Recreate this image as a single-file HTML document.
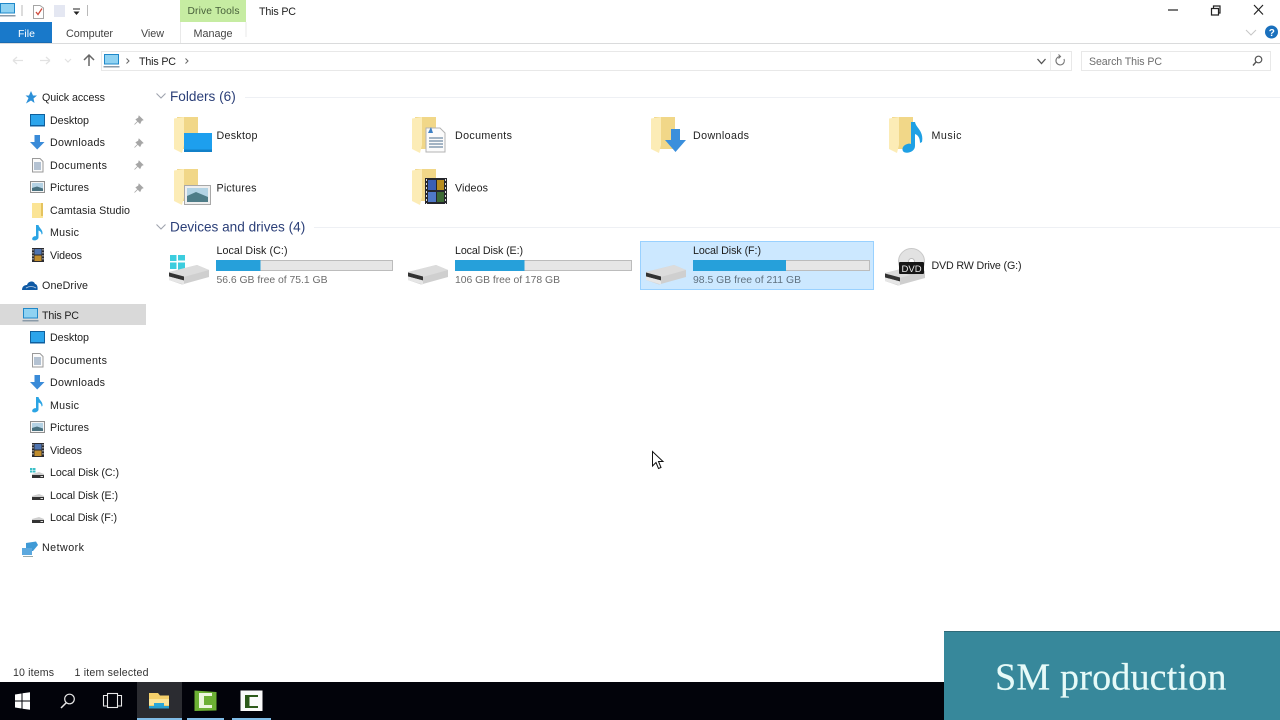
<!DOCTYPE html>
<html><head><meta charset="utf-8"><title>This PC</title>
<style>
html,body{margin:0;padding:0;background:#fff;width:1280px;height:720px;overflow:hidden}
svg{display:block;position:absolute;left:0;top:0;filter:blur(.3px)}
text{font-family:"Liberation Sans",sans-serif;font-size:10.7px;fill:#1e1e1e}
.g{fill:#6d6d6d}
.h{font-size:13.6px;fill:#2b3f78}
.r{font-size:10.8px;fill:#444}
.wm{font-family:"Liberation Serif",serif;font-size:38px;letter-spacing:.2px;fill:#e6faf8;stroke:#e6faf8;stroke-width:.2px}
</style></head><body>
<svg width="1280" height="720" viewBox="0 0 1280 720" xmlns="http://www.w3.org/2000/svg">
<defs>
<symbol id="folder" overflow="visible">
 <path d="M3 2H24V34H9Z" fill="#f1d788"/>
 <path d="M0 3.500L10 2V30L8 38L0 34Z" fill="#fcecb6"/>
</symbol>
<symbol id="drive" overflow="visible">
 <path d="M0 7L28 0L40 5V12L13 19.500L0 15Z" fill="#cfcfcf"/>
 <path d="M0 7L28 0L40 5L13 12.500Z" fill="#dcdcdc"/>
 <path d="M0 7.500L15 11.500V15.500L0 11.500Z" fill="#333"/>
 <path d="M0 11.500L15 15.500V19.500L0 15Z" fill="#e6e6e6"/>
</symbol>
<symbol id="sdrive" overflow="visible">
 <path d="M0 2L7 0L12 2V3H0Z" fill="#cfcfcf"/>
 <path d="M0 3H12V6H0Z" fill="#333"/>
 <path d="M8.500 4H11V5H8.500Z" fill="#ddd"/>
</symbol>
<symbol id="sdesk" overflow="visible">
 <rect x="0.500" y="0.500" width="14" height="11" fill="#2ca5ec" stroke="#10609c"/>
 <path d="M0 11H15V12.500H0Z" fill="#0f5f9f"/>
</symbol>
<symbol id="sdown" overflow="visible">
 <path d="M4.500 0H10V7H14.500L7.200 14.500L0 7H4.500Z" fill="#3a8bd8"/>
</symbol>
<symbol id="sdoc" overflow="visible">
 <path d="M1.500 .5H9L12 3.500V14H1.500Z" fill="#fbfbfb" stroke="#9a9a9a"/>
 <path d="M3 5H10M3 7H10M3 9H10M3 11H10" stroke="#6c8aa8"/>
</symbol>
<symbol id="spic" overflow="visible">
 <rect x=".5" y=".5" width="14" height="11" fill="#f4f4f4" stroke="#8e8e8e"/>
 <rect x="2" y="2" width="11" height="8" fill="#b4d2e4"/>
 <path d="M2 7L7 5.500L13 7.500V10H2Z" fill="#4a7280"/>
</symbol>
<symbol id="smusic" overflow="visible">
 <path d="M4 0H6.500C7 3 11 4.500 10.500 9L9.500 9.500C9.500 7 8 6 6.500 5.500V12.500C6.500 14.500 3.500 15.800 1.500 15.300C-.5 14.800 0 12.500 1.500 11.700C2.500 11.200 3.300 11 4 11.300Z" fill="#2ba4e4"/>
</symbol>
<symbol id="svid" overflow="visible">
 <rect x="0" y="0" width="12" height="14" fill="#2b2b30"/>
 <rect x="2.500" y="1" width="7" height="5.500" fill="#4f74b0"/>
 <rect x="2.500" y="7.500" width="7" height="5.500" fill="#c08d2e"/>
 <path d="M1 1V13M11 1V13" stroke="#ddd" stroke-dasharray="1.500 1.500"/>
</symbol>
<symbol id="pin" overflow="visible">
 <path d="M5 0L9 4L7.500 4.500L6 7.500L2 3.500L4.500 2ZM3.500 5.500L.5 8.500" fill="#a6a6a6" stroke="#a6a6a6" stroke-width=".8"/>
</symbol>
<symbol id="pc" overflow="visible">
 <rect x="0" y="0" width="15" height="10.500" fill="#1f88c9"/>
 <rect x="1" y="1" width="13" height="8.500" fill="#8fd2f2"/>
 <rect x="-.5" y="12" width="16" height="1.500" fill="#8a9aa8"/>
</symbol>
</defs>

<!-- title bar -->
<use href="#pc" x="0" y="3"/>
<rect x="21.500" y="5" width="1" height="11" fill="#b9b9b9"/>
<path d="M33.500 5.500H40L43.500 8V18.500H33.500Z" fill="#fff" stroke="#a5a5a5"/>
<path d="M36 12L38 14.500L42 8.500" fill="none" stroke="#cf4a3c" stroke-width="1.300"/>
<path d="M54 5H65V17H54Z" fill="#e4e7f2"/>
<path d="M73 9H80" stroke="#222"/><path d="M73.500 11.500H79.500L76.500 15Z" fill="#222"/>
<rect x="87" y="5" width="1" height="11" fill="#b9b9b9"/>
<rect x="180" y="0" width="66" height="22" fill="#c6eca2"/>
<text x="187.500" y="14" style="font-size:10.300px;fill:#47603a" textLength="52">Drive Tools</text>
<text x="259" y="15" textLength="37">This PC</text>
<path d="M1168 10H1178" stroke="#222" stroke-width="1.200"/>
<path d="M1211.500 8.500H1218.500V15H1211.500ZM1213.500 8.500V6H1220V13H1218.500" fill="none" stroke="#222" stroke-width="1.200"/>
<path d="M1254 5L1263 14.500M1263 5L1254 14.500" stroke="#222" stroke-width="1.200"/>

<!-- ribbon tabs -->
<rect x="0" y="22" width="52" height="22" fill="#1979ca"/>
<rect x="0" y="42" width="52" height="2" fill="#176ab2"/>
<text x="18" y="37" style="font-size:10.500px;fill:#fff">File</text>
<text x="66" y="37" class="r" style="font-size:10.800px" textLength="47">Computer</text>
<text x="141" y="37" class="r" style="font-size:10.800px" textLength="23">View</text>
<path d="M180.500 22V43M246 22V37" stroke="#e9e9e9"/>
<text x="193.500" y="37" class="r" style="font-size:10.800px" textLength="39">Manage</text>
<rect x="0" y="43" width="1280" height="1" fill="#dadbdc"/>
<path d="M1246 30L1251 35L1256 30" fill="none" stroke="#c6c6c6"/>
<circle cx="1271.500" cy="32" r="6.500" fill="#1a70bd"/>
<text x="1268.700" y="36" style="font-size:10px;font-weight:bold;fill:#fff">?</text>

<!-- address bar -->
<path d="M13 60.500H23M13 60.500L17 57M13 60.500L17 64M40 60.500H50M50 60.500L46 57M50 60.500L46 64M65 59L68 62L71 59" fill="none" stroke="#e2e2e2" stroke-width="1.200"/>
<path d="M89 66V55M84 60L89 55L94 60" fill="none" stroke="#666" stroke-width="1.500"/>
<rect x="101.500" y="51.500" width="970" height="19" fill="#fff" stroke="#e8e8e8"/>
<rect x="1050" y="52" width="1" height="18" fill="#ececec"/>
<use href="#pc" x="104" y="54"/>
<path d="M126.500 58.500L129 61L126.500 63.500M185.500 58.500L188 61L185.500 63.500" fill="none" stroke="#666"/>
<text x="139" y="65" textLength="37">This PC</text>
<path d="M1037.500 59L1041.500 63.500L1045.500 59" fill="none" stroke="#555" stroke-width="1.300"/>
<path d="M1064 59A4.200 4.200 0 1 1 1060 56.500M1058.500 54.500L1060.500 56.500L1058.500 58.500" fill="none" stroke="#777" stroke-width="1.100"/>
<rect x="1081.500" y="51.500" width="189" height="19" fill="#fff" stroke="#e8e8e8"/>
<text x="1089" y="65" class="g" style="font-size:10.600px" textLength="73">Search This PC</text>
<circle cx="1258.500" cy="59.500" r="3.300" fill="none" stroke="#555" stroke-width="1.200"/>
<path d="M1256 62L1253 65.500" stroke="#555" stroke-width="1.400"/>

<!-- sidebar -->
<rect x="0" y="304" width="146" height="21" fill="#d9d9d9"/>
<path d="M31 91L33 95.500H37L33.500 98.500L34.500 103L31 100.500L26 103.500L28.500 98L25.500 95.500H29Z" fill="#2c90d8"/>
<text x="42" y="101" textLength="63">Quick access</text>
<use href="#sdesk" x="30" y="114"/><text x="50" y="124" textLength="39">Desktop</text><use href="#pin" x="134" y="116"/>
<use href="#sdown" x="30" y="135"/><text x="50" y="146" textLength="55">Downloads</text><use href="#pin" x="134" y="139"/>
<use href="#sdoc" x="31" y="158"/><text x="50" y="169" textLength="57">Documents</text><use href="#pin" x="134" y="161"/>
<use href="#spic" x="30" y="181"/><text x="50" y="191" textLength="39">Pictures</text><use href="#pin" x="134" y="184"/>
<path d="M32 203H43V218H32Z" fill="#fbe495"/><path d="M41 203H43V216H41Z" fill="#e5c35e"/><text x="50" y="214" textLength="80">Camtasia Studio</text>
<use href="#smusic" x="32" y="225"/><text x="50" y="236" textLength="29">Music</text>
<use href="#svid" x="32" y="248"/><text x="50" y="259" textLength="32">Videos</text>
<path d="M22 290C22 286 25 285 27 285C28 281 34 280 35 284C37 284 38 287 37.500 290Z" fill="#0f5aa5"/><path d="M26 288C29 286 33 286 36 288" fill="none" stroke="#fff" stroke-width=".8" opacity=".7"/>
<text x="42" y="289" textLength="46">OneDrive</text>
<use href="#pc" x="23" y="308"/><text x="42" y="319" textLength="37">This PC</text>
<use href="#sdesk" x="30" y="331"/><text x="50" y="341" textLength="39">Desktop</text>
<use href="#sdoc" x="31" y="353"/><text x="50" y="364" textLength="57">Documents</text>
<use href="#sdown" x="30" y="375"/><text x="50" y="386" textLength="55">Downloads</text>
<use href="#smusic" x="32" y="397"/><text x="50" y="409" textLength="29">Music</text>
<use href="#spic" x="30" y="421"/><text x="50" y="431" textLength="39">Pictures</text>
<use href="#svid" x="32" y="443"/><text x="50" y="454" textLength="32">Videos</text>
<path d="M30 468H32.500V470H30ZM33 468H35.500V470H33ZM30 470.500H32.500V472.500H30ZM33 470.500H35.500V472.500H33Z" fill="#3cc0c8"/>
<use href="#sdrive" x="32" y="472"/><text x="50" y="476" textLength="69">Local Disk (C:)</text>
<use href="#sdrive" x="32" y="494"/><text x="50" y="499" textLength="68">Local Disk (E:)</text>
<use href="#sdrive" x="32" y="517"/><text x="50" y="521" textLength="67">Local Disk (F:)</text>
<path d="M26 543L36 541.500L38 545L33 551H26Z" fill="#3f9ad6"/><path d="M22 548H32V555H22Z" fill="#5ba8de"/><path d="M23 556.500H33" stroke="#9aa"/>
<text x="42" y="551" textLength="42">Network</text>

<!-- folders group -->
<path d="M156.500 93.500L161 98L165.500 93.500" fill="none" stroke="#9fa3ae" stroke-width="1.100"/>
<text x="170" y="101" class="h">Folders (6)</text>
<rect x="245" y="97" width="1035" height="1" fill="#eef0f4"/>

<use href="#folder" x="174" y="115"/>
<rect x="184" y="133" width="28" height="19" fill="#1d9fee"/><rect x="184" y="149.500" width="28" height="2.500" fill="#1180c8"/>
<text x="216.500" y="139" textLength="41">Desktop</text>

<use href="#folder" x="412" y="115"/>
<path d="M426 128H440L445 133V152H426Z" fill="#fbfbfb" stroke="#b3b3b3"/>
<path d="M428 133L431 127L433 133Z" fill="#3c7fc4"/><path d="M429 138H443M429 141H443M429 144H443M429 147H443" stroke="#4b6e8e"/>
<text x="455" y="139" textLength="57">Documents</text>

<use href="#folder" x="651" y="115"/>
<path d="M671 129H680V140H686L675.500 152L665 140H671Z" fill="#3a8fdc"/>
<text x="693" y="139" textLength="56">Downloads</text>

<use href="#folder" x="889" y="115"/>
<path d="M911 122H915C916 128 924 131 922 142L920 143C920 138 918 135 915 134V146C915 151 909 153.500 905 152.500C901 151.500 902 146 906 144.500C908 143.500 910 143.500 911 144Z" fill="#1fa0e4"/>
<text x="931.500" y="139" textLength="30">Music</text>

<use href="#folder" x="174" y="167"/>
<rect x="184.500" y="185.500" width="26" height="19" fill="#efefef" stroke="#a8a8a8"/>
<rect x="187" y="188" width="21" height="14" fill="#b3d3e4"/>
<path d="M187 196L196 192L208 197V202H187Z" fill="#4f7d88"/>
<text x="216.500" y="191.500" textLength="40">Pictures</text>

<use href="#folder" x="412" y="167"/>
<rect x="425" y="178" width="22" height="26" fill="#25262c"/>
<rect x="428" y="180" width="8" height="10" fill="#3a5fb4"/><rect x="437" y="180" width="7" height="10" fill="#b78d20"/>
<rect x="428" y="192" width="8" height="10" fill="#4f78c6"/><rect x="437" y="192" width="7" height="10" fill="#3d6a34"/>
<path d="M426.500 179V204M445.500 179V204" stroke="#ddd" stroke-dasharray="2 2"/>
<text x="455" y="191.500" textLength="33">Videos</text>

<!-- devices group -->
<path d="M156.500 224.500L161 229L165.500 224.500" fill="none" stroke="#9fa3ae" stroke-width="1.100"/>
<text x="170" y="231.500" class="h">Devices and drives (4)</text>
<rect x="314" y="227" width="966" height="1" fill="#eef0f4"/>

<rect x="640.500" y="241.500" width="233" height="48" fill="#cce8ff" stroke="#99d1ff"/>

<path d="M170 255H176.500V261H170ZM178 255H185V260.500H178ZM170 262.500H176.500V269H170ZM178 262.500H185V270H178Z" fill="#3ccdde"/>
<use href="#drive" x="169" y="265"/>
<text x="216.500" y="254" textLength="71">Local Disk (C:)</text>
<rect x="216.500" y="260.500" width="176" height="10" fill="#e6e6e6" stroke="#bcbcbc"/>
<rect x="216" y="260" width="44.500" height="11" fill="#26a0da"/>
<text x="216.500" y="283" class="g" style="font-size:10.400px" textLength="111">56.6 GB free of 75.1 GB</text>

<use href="#drive" x="408" y="265"/>
<text x="455" y="254" textLength="68">Local Disk (E:)</text>
<rect x="455.500" y="260.500" width="176" height="10" fill="#e6e6e6" stroke="#bcbcbc"/>
<rect x="455" y="260" width="69.500" height="11" fill="#26a0da"/>
<text x="455" y="283" class="g" style="font-size:10.400px" textLength="105">106 GB free of 178 GB</text>

<use href="#drive" x="646" y="265"/>
<text x="693" y="254" textLength="68">Local Disk (F:)</text>
<rect x="693.500" y="260.500" width="176" height="10" fill="#e6e6e6" stroke="#bcbcbc"/>
<rect x="693" y="260" width="93" height="11" fill="#26a0da"/>
<text x="693" y="283" style="font-size:10.400px;fill:#5f7180" textLength="108">98.5 GB free of 211 GB</text>

<use href="#drive" x="885" y="266"/>
<circle cx="911.500" cy="261.500" r="13" fill="#e2e2e2" stroke="#c8c8c8"/>
<circle cx="911.500" cy="261.500" r="3" fill="#fff" stroke="#bbb"/>
<rect x="899" y="262" width="25" height="12" rx="1" fill="#161616"/>
<text x="901.500" y="272" style="font-size:9.500px;fill:#e8e8e8">DVD</text>
<text x="931.500" y="269" textLength="90">DVD RW Drive (G:)</text>

<!-- cursor -->
<path d="M652.500 451.500V466L656 462.500L658.500 468.500L661 467.500L658.500 461.500L663 461.500Z" fill="#fff" stroke="#111"/>

<!-- status -->
<text x="13" y="676" style="font-size:10.600px;fill:#333" textLength="41">10 items</text>
<text x="74.500" y="676" style="font-size:10.600px;fill:#333" textLength="74">1 item selected</text>

<!-- taskbar -->
<rect x="0" y="682" width="1280" height="38" fill="#02030a"/>
<rect x="137" y="682" width="45" height="38" fill="#2b2c31"/>
<rect x="137" y="718" width="45" height="2" fill="#80bce6"/>
<rect x="187" y="718" width="37" height="2" fill="#80bce6"/>
<rect x="232" y="718" width="39" height="2" fill="#80bce6"/>
<path d="M15 694.500L21.500 693.500V700.500H15ZM22.500 693.300L30 692.200V700.500H22.500ZM15 701.500H21.500V708.500L15 707.500ZM22.500 701.500H30V709.800L22.500 708.700Z" fill="#fff"/>
<circle cx="69.500" cy="699" r="4.800" fill="none" stroke="#e8e8e8" stroke-width="1.200"/>
<path d="M66 703L61 708" stroke="#e8e8e8" stroke-width="1.500"/>
<path d="M107 695.500H103.500V706H107M118 695.500H121.500V706H118" fill="none" stroke="#e8e8e8" stroke-width="1.100"/>
<rect x="107.500" y="693.500" width="10" height="14" fill="none" stroke="#e8e8e8" stroke-width="1.100"/>
<path d="M149 693H158L160 695.500H169V708H149Z" fill="#f4cf6a"/>
<path d="M149 699H169V705H149Z" fill="#fbe59a"/>
<path d="M154 708V703H164V708Z" fill="#2aa7d8"/><rect x="149" y="706" width="20" height="2.500" fill="#29a0d0"/>
<path d="M194.500 690.500L216.500 692V710.500L194.500 711Z" fill="#6cb034"/>
<path d="M199 693H212V696H204V705H212V708H199Z" fill="#ecf6de"/>
<path d="M240.500 690.500H262.500V711H240.500Z" fill="#fafafa"/>
<path d="M245 695H258V697H249.500V706H258V708H245Z" fill="#2d5a1a"/>

<!-- watermark -->
<rect x="944" y="631" width="336" height="89" fill="#37889b"/>
<rect x="944" y="631" width="336" height="1" fill="#2f6a78"/>
<text x="995" y="689.500" class="wm">SM production</text>
</svg>
</body></html>
